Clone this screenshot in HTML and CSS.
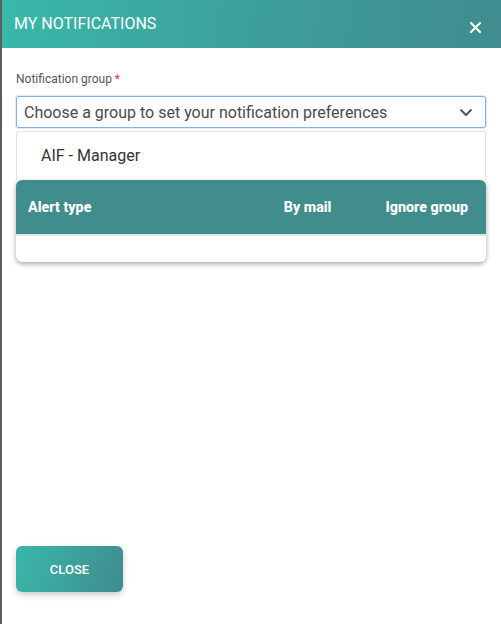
FILE: index.html
```html
<!DOCTYPE html>
<html>
<head>
<meta charset="utf-8">
<link rel="stylesheet" href="styles.css">
</head>
<body>
<div class="dialog">
  <header class="dlg-header">
    <h1 class="dlg-title">MY NOTIFICATIONS</h1>
    <button class="dlg-x" aria-label="Close">
      <svg width="11" height="11" viewBox="0 0 11 11"><path d="M1 1L10 10M10 1L1 10" stroke="#fff" stroke-width="2" stroke-linecap="square"/></svg>
    </button>
  </header>
  <main class="dlg-body">
    <label class="field-label">Notification group <span class="req">*</span></label>
    <div class="select">
      <span class="select-text">Choose a group to set your notification preferences</span>
      <svg class="chev" width="14" height="9" viewBox="0 0 14 9"><path d="M1.5 1.5L7 7L12.5 1.5" fill="none" stroke="#555" stroke-width="2"/></svg>
    </div>
    <div class="menu">
      <div class="menu-item">AIF - Manager</div>
    </div>
    <div class="table-card">
      <div class="thead">
        <span class="th th-type">Alert type</span>
        <span class="th th-mail">By mail</span>
        <span class="th th-ignore">Ignore group</span>
      </div>
      <div class="tbody"></div>
    </div>
  </main>
  <footer class="dlg-footer">
    <button class="btn-close">CLOSE</button>
  </footer>
</div>
</body>
</html>
```
FILE: styles.css
```css
html, body {
  margin: 0;
  padding: 0;
  background: #fff;
  font-family: Roboto, "Liberation Sans", Arial, sans-serif;
}
.dialog {
  width: 501px;
  height: 624px;
  box-sizing: border-box;
  border-left: 2px solid #5f5f5f;
  display: flex;
  flex-direction: column;
  background: #fff;
}
.dlg-header {
  height: 48px;
  flex: none;
  display: flex;
  align-items: center;
  justify-content: space-between;
  padding: 0 20px 0 12px;
  background: linear-gradient(100deg, #39b8a9 0%, #3d9f9b 50%, #408c8e 100%);
}
.dlg-title {
  margin: 0;
  font-size: 16px;
  font-weight: 400;
  color: #fff;
  padding-bottom: 1px;
}
.dlg-x {
  background: none;
  border: 0;
  padding: 0;
  width: 11px;
  height: 11px;
  margin-top: 6px;
  display: flex;
  align-items: center;
  justify-content: center;
}
.dlg-x svg { display: block; }
.dlg-body {
  flex: 1;
  padding: 24px 15px 0 14px;
  display: flex;
  flex-direction: column;
}
.field-label {
  font-size: 12px;
  color: #555;
  line-height: 14px;
  margin-bottom: 10px;
}
.req { color: #e53935; }
.select {
  height: 32px;
  box-sizing: border-box;
  border: 1px solid #86aef0;
  border-radius: 3px;
  display: flex;
  align-items: center;
  justify-content: space-between;
  padding: 0 12px 0 7px;
  box-shadow: 0 0 0 1px rgba(134,174,240,0.25);
}
.select-text {
  font-size: 16px;
  color: #4a4a4a;
}
.menu {
  margin-top: 3px;
  border: 1px solid #e2e2e2;
  border-bottom: 0;
  border-radius: 3px 3px 0 0;
  height: 49px;
  box-sizing: border-box;
  display: flex;
  align-items: center;
}
.menu-item {
  font-size: 16px;
  color: #333;
  padding-left: 24px;
  padding-bottom: 1px;
}
.table-card {
  border-radius: 6px;
  overflow: hidden;
  box-shadow: 0 2px 5px rgba(0,0,0,0.35);
  background: #fff;
}
.thead {
  height: 54px;
  background: #418c8c;
  border-bottom: 2px solid #e3e3e3;
  display: flex;
  align-items: center;
  padding: 0 18px 0 12px;
}
.th {
  color: #fff;
  font-weight: 800;
  font-size: 14.3px;
}
.th-type { flex: 1; }
.th-mail { margin-right: 54px; }
.tbody {
  height: 26px;
}
.dlg-footer {
  padding: 0 0 32px 14px;
}
.btn-close {
  width: 107px;
  height: 46px;
  border: 0;
  border-radius: 6px;
  background: linear-gradient(110deg, #39b8a9 0%, #408c8e 100%);
  color: #fff;
  font-family: Roboto, "Liberation Sans", Arial, sans-serif;
  font-size: 13px;
  font-weight: 500;
  box-shadow: 0 3px 6px rgba(0,0,0,0.2);
}
```
